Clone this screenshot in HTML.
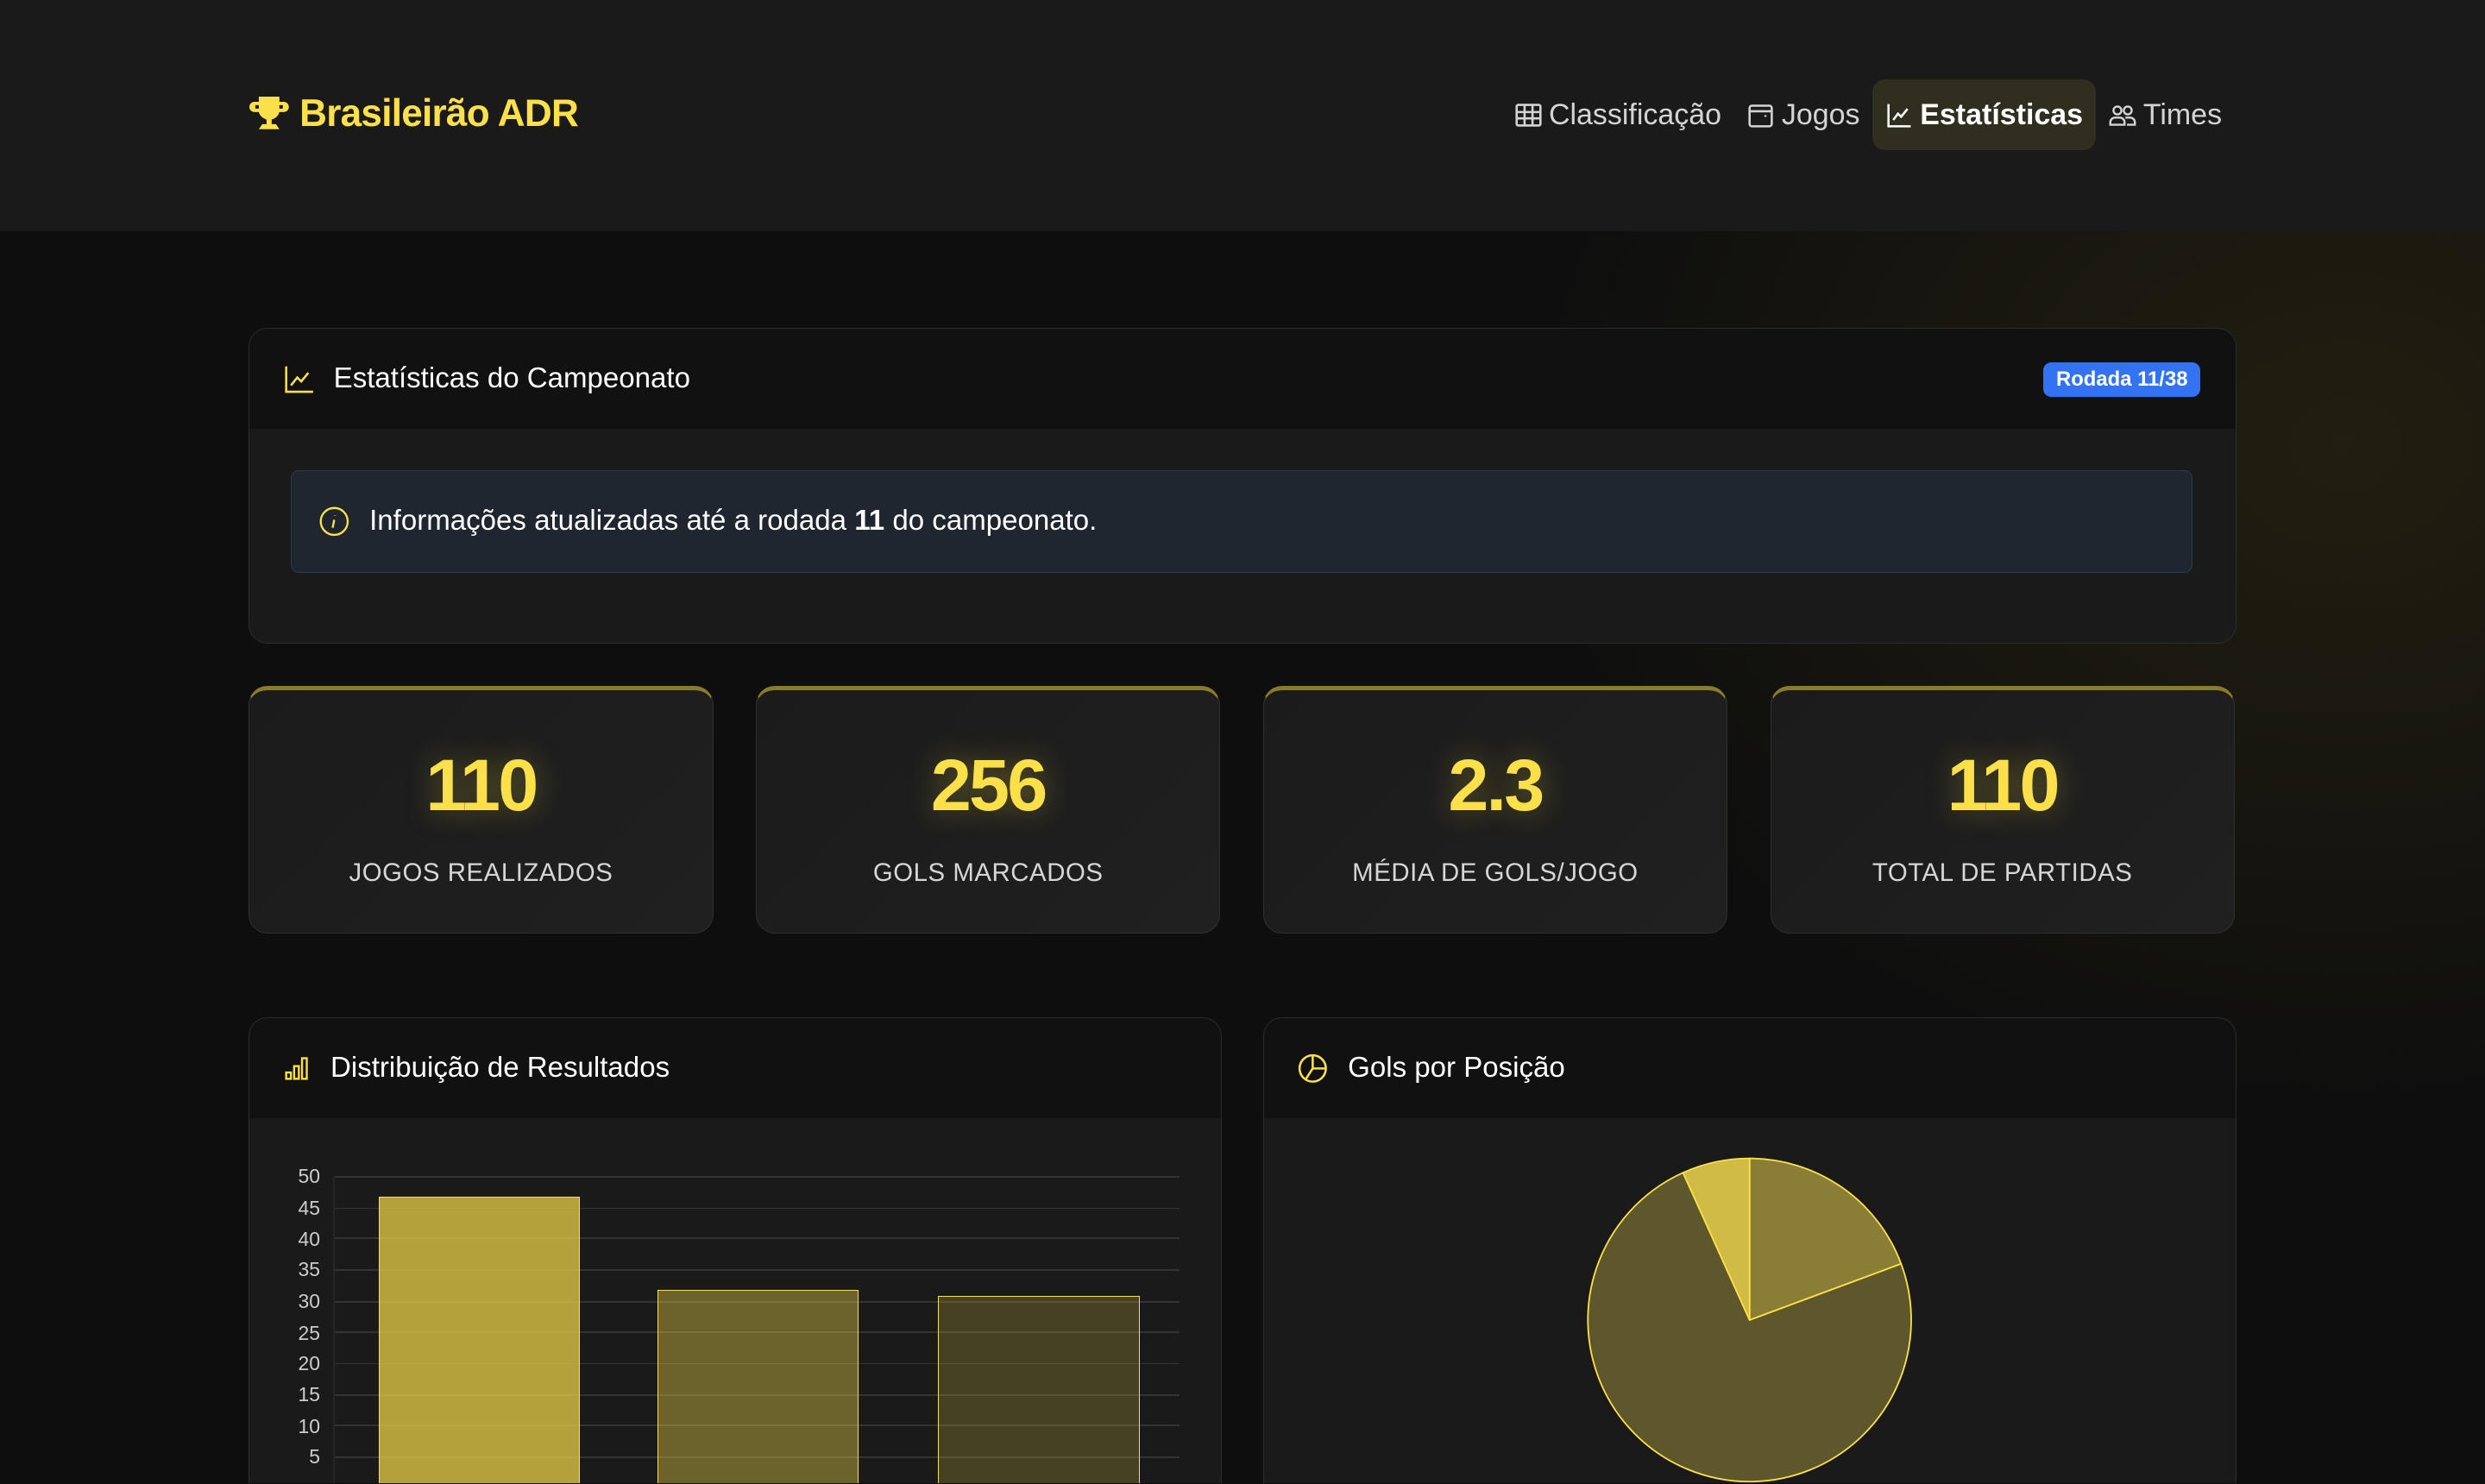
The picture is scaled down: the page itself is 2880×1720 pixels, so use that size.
<!DOCTYPE html>
<html><head><meta charset="utf-8"><style>
*{box-sizing:border-box;margin:0;padding:0}
html,body{width:2880px;height:1720px;overflow:hidden;background:#0f0f0f}
#w{zoom:1.8367;width:1568px;height:936px;position:relative;font-family:"Liberation Sans",sans-serif;color:#fff;
background:radial-gradient(ellipse 520px 420px at 1480px 280px,rgba(70,62,20,.35),rgba(0,0,0,0) 100%),#0e0e0e;overflow:hidden}
.hdr{position:absolute;left:0;top:0;width:1568px;height:146px;background:#1a1a1a}
.logo{position:absolute;left:157px;top:58px;display:flex;align-items:center;color:#fbe04a;font-weight:bold;font-size:24px;letter-spacing:-.4px}
.nav{position:absolute;top:50px;right:158px;display:flex;height:45px;align-items:center}
.nav div{display:flex;align-items:center;height:45px;padding:0 8px;font-size:18.5px;color:#d4d4d4;gap:4px}
.nav .act{background:#2f2e1f;border-radius:8px;color:#fff;font-weight:bold}
.card{position:absolute;border:1px solid #2c2c2c;border-radius:12px;background:#1a1a1a;overflow:hidden}
.ch{height:63px;background:#111;display:flex;align-items:center;padding-left:21px;font-size:18px;gap:12px}
.stat{position:absolute;top:433px;width:293px;height:156px;border:1px solid #2f2f2f;border-top:3px solid #8a7b2a;border-radius:12px;background:linear-gradient(135deg,#1b1b1b,#202020);text-align:center}
.stat .n{margin-top:32px;font-size:46px;font-weight:bold;color:#fbe04a;letter-spacing:-1.5px;text-shadow:0 0 18px rgba(250,220,60,.35);line-height:56px}
.stat .l{margin-top:18px;font-size:16px;color:#d6d6d6;letter-spacing:.3px}
.yl{position:absolute;font-size:12.5px;color:#ccc;text-align:right;width:30px;left:172px}
.gl{position:absolute;left:210px;width:534px;height:1px;background:#333}
</style></head><body><div id="w">
<div class="hdr"></div>
<div class="logo"><svg width="26" height="26" viewBox="0 0 24 24"><path d="M6 2h12v3h2.5a2.5 2.5 0 0 1 0 6H18a6 6 0 0 1-4.5 4.3V18h2.5l2 3H6l2-3h2.5v-2.7A6 6 0 0 1 6 11H3.5a2.5 2.5 0 0 1 0-6H6z M4 7v2h2V7z M18 7v2h2V7z" fill="#fbe04a"/></svg><span style="margin-left:6px">Brasileirão ADR</span></div>
<div class="nav">
<div><svg width="18" height="18" viewBox="0 0 18 18" fill="none" stroke="#d4d4d4" stroke-width="1.4"><rect x="1.5" y="2.5" width="15" height="13" rx="1"/><path d="M1.5 7h15M1.5 11h15M6.5 2.5v13M11.5 2.5v13"/></svg>Classificação</div>
<div><svg width="18" height="18" viewBox="0 0 18 18" fill="none" stroke="#d4d4d4" stroke-width="1.4"><rect x="2" y="3" width="14" height="13" rx="1.5"/><path d="M2 6.5h14M12 9v1"/></svg>Jogos</div>
<div class="act"><svg width="18" height="18" viewBox="0 0 18 18" fill="none" stroke="#fff" stroke-width="1.4"><path d="M2 2v14h14M5 12l3-4 2 2 4-5"/></svg>Estatísticas</div>
<div><svg width="18" height="18" viewBox="0 0 18 18" fill="none" stroke="#d4d4d4" stroke-width="1.3"><circle cx="6" cy="6" r="2.5"/><circle cx="12.5" cy="6" r="2.5"/><path d="M1.5 15v-1.5a3 3 0 0 1 3-3h3a3 3 0 0 1 3 3V15zM11 10.5h3a3 3 0 0 1 3 3V15h-5"/></svg>Times</div>
</div>

<div class="card" style="left:157px;top:207px;width:1254px;height:199px">
<div class="ch"><svg width="20" height="20" viewBox="0 0 20 20" fill="none" stroke="#fbe04a" stroke-width="1.4"><path d="M2 2v16h17M5 14l4-5 2.5 2.5L16 6"/></svg>Estatísticas do Campeonato</div>
<div style="position:absolute;right:22px;top:21px;background:#3372f0;border-radius:5px;padding:0 8px;height:22px;line-height:22px;font-size:13px;font-weight:bold">Rodada 11/38</div>
<div style="position:absolute;left:26px;top:89px;width:1200px;height:65px;background:#1f2630;border:1px solid #2e3b4c;border-radius:5px;display:flex;align-items:center;padding-left:17px;font-size:18px;gap:12px"><svg width="20" height="20" viewBox="0 0 20 20" fill="none" stroke="#fbe04a" stroke-width="1.3"><circle cx="10" cy="10" r="8.5"/><path d="M10.5 6.2v.3M10 9l-1 5"/></svg><span>Informações atualizadas até a rodada <b>11</b> do campeonato.</span></div>
</div>

<div class="stat" style="left:157px"><div class="n">110</div><div class="l">JOGOS REALIZADOS</div></div>
<div class="stat" style="left:477px"><div class="n">256</div><div class="l">GOLS MARCADOS</div></div>
<div class="stat" style="left:797px"><div class="n">2.3</div><div class="l">MÉDIA DE GOLS/JOGO</div></div>
<div class="stat" style="left:1117px"><div class="n">110</div><div class="l">TOTAL DE PARTIDAS</div></div>

<div class="card" style="left:157px;top:642px;width:614px;height:294px;border-bottom:none;border-radius:12px 12px 0 0">
<div class="ch"><svg width="18" height="18" viewBox="0 0 18 18" fill="none" stroke="#fbe04a" stroke-width="1.3"><rect x="2" y="12" width="3" height="4"/><rect x="7" y="8" width="3" height="8"/><rect x="12" y="3" width="3" height="13"/></svg>Distribuição de Resultados</div>
</div>
<div class="card" style="left:797px;top:642px;width:614px;height:294px;border-bottom:none;border-radius:12px 12px 0 0">
<div class="ch"><svg width="20" height="20" viewBox="0 0 20 20" fill="none" stroke="#fbe04a" stroke-width="1.4"><circle cx="10" cy="10" r="8.3"/><path d="M10 1.7V10h8.3M10 10l-4.5 7"/></svg>Gols por Posição</div>
</div>

<div class="yl" style="top:735px">50</div><div class="gl" style="top:742px"></div>
<div class="yl" style="top:755px">45</div><div class="gl" style="top:762px"></div>
<div class="yl" style="top:775px">40</div><div class="gl" style="top:781px"></div>
<div class="yl" style="top:794px">35</div><div class="gl" style="top:801px"></div>
<div class="yl" style="top:814px">30</div><div class="gl" style="top:821px"></div>
<div class="yl" style="top:834px">25</div><div class="gl" style="top:840px"></div>
<div class="yl" style="top:853px">20</div><div class="gl" style="top:860px"></div>
<div class="yl" style="top:873px">15</div><div class="gl" style="top:880px"></div>
<div class="yl" style="top:893px">10</div><div class="gl" style="top:899px"></div>
<div class="yl" style="top:912px">5</div><div class="gl" style="top:919px"></div>
<div style="position:absolute;left:210px;top:742px;width:1px;height:194px;background:#262626"></div>
<div style="position:absolute;left:239px;top:755px;width:127px;height:181px;background:rgba(232,207,72,.75);border:1px solid #fbe04a;border-bottom:none"></div>
<div style="position:absolute;left:415px;top:814px;width:127px;height:122px;background:rgba(232,207,72,.4);border:1px solid #fbe04a;border-bottom:none"></div>
<div style="position:absolute;left:592px;top:818px;width:127px;height:118px;background:rgba(232,207,72,.22);border:1px solid #fbe04a;border-bottom:none"></div>

<svg style="position:absolute;left:0;top:0" width="1568" height="936">
<path d="M1104 833L1104 731A102 102 0 0 1 1199.6 797.5Z" fill="#8a7d35" stroke="#fbe04a" stroke-width="1"/>
<path d="M1104 833L1199.6 797.5A102 102 0 1 1 1062 740Z" fill="#5e572b" stroke="#fbe04a" stroke-width="1"/>
<path d="M1104 833L1062 740A102 102 0 0 1 1104 731Z" fill="#d0bb45" stroke="#fbe04a" stroke-width="1"/>
</svg>
</div></body></html>
